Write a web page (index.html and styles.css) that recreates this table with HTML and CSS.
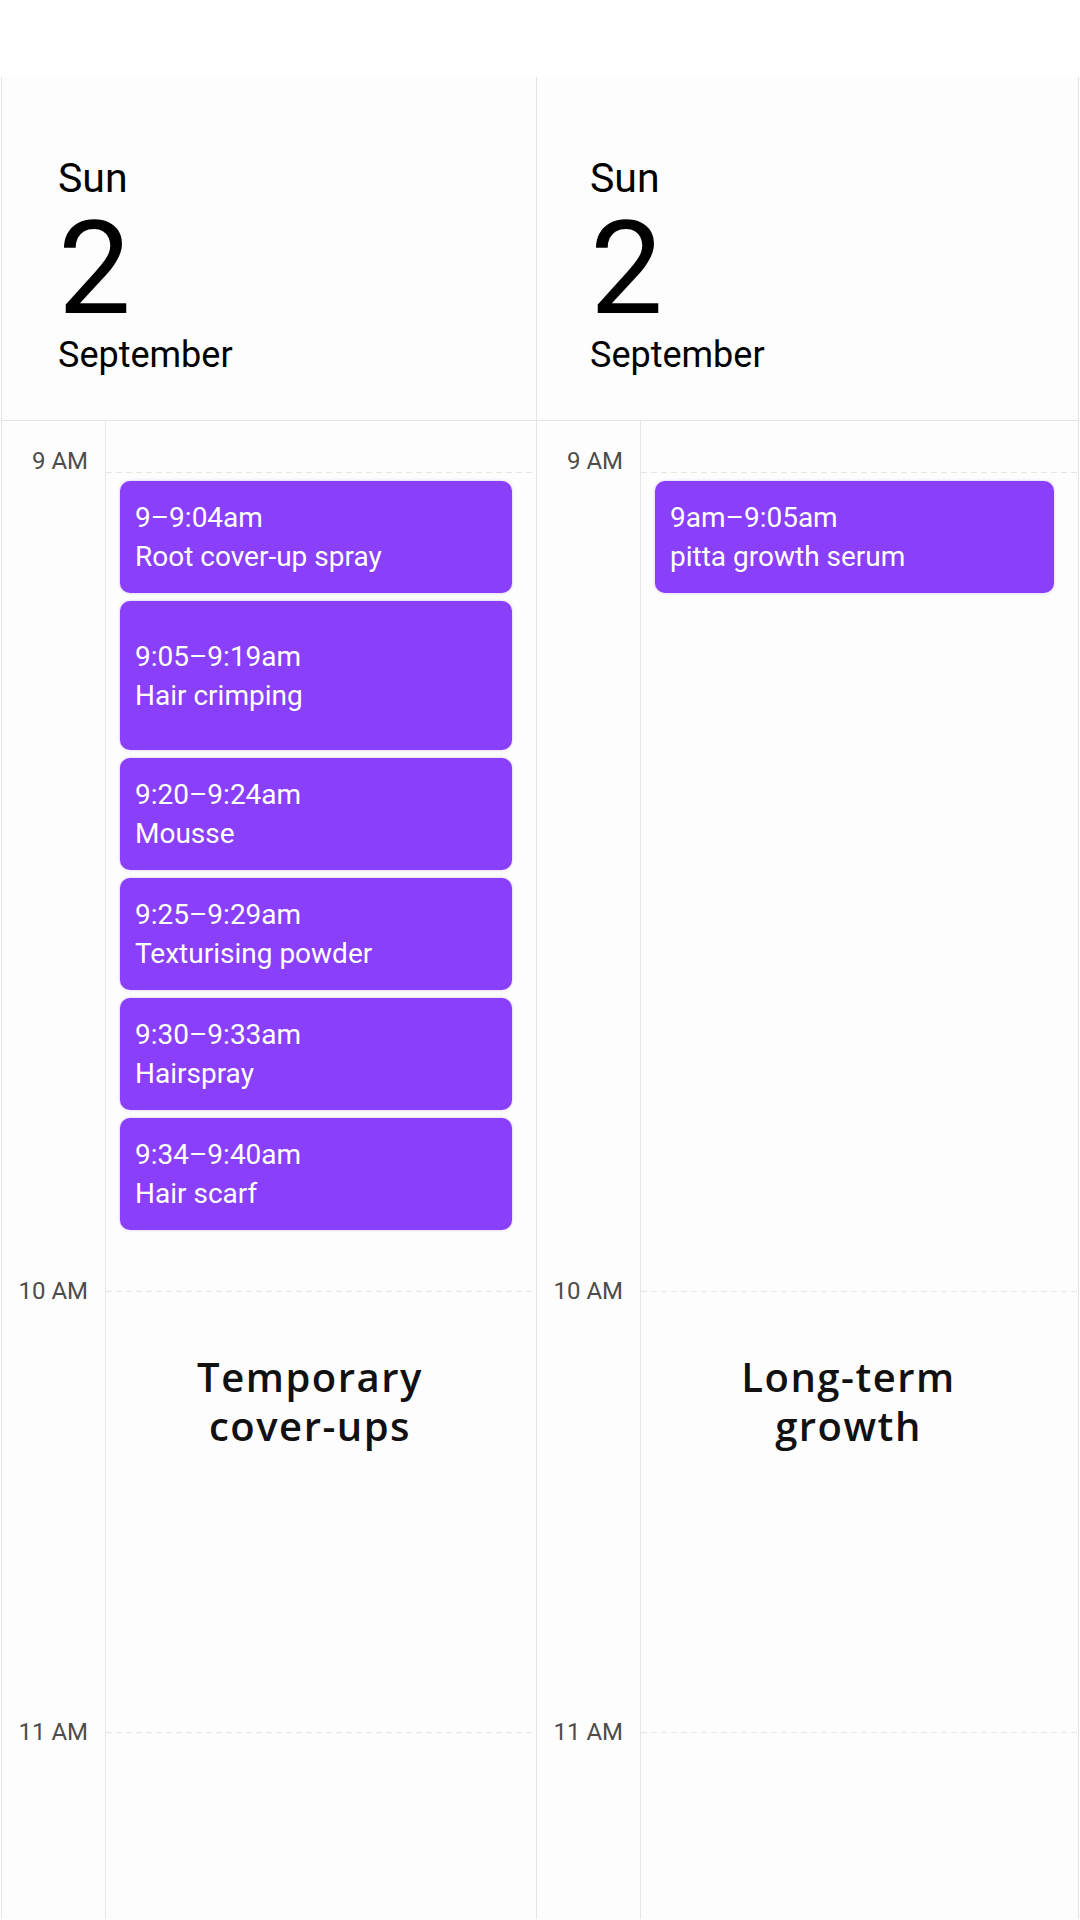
FILE: index.html
```html
<!DOCTYPE html>
<html lang="en">
<head>
    <meta charset="UTF-8">
    <meta name="viewport" content="width=device-width, initial-scale=1.0">
    <title>Hair routine - Sun 2 September</title>
    <link rel="stylesheet" href="styles.css">
</head>
<body>
    <div class="calendar">
        <section class="day">
            <header class="day-head">
                <div class="weekday">Sun</div>
                <div class="date">2</div>
                <div class="month">September</div>
            </header>
            <div class="day-body">
                <div class="gutter-cell gutter-top"><span class="hour-label">9 AM</span></div>
                <div class="lane-cell"></div>

                <div class="gutter-cell"></div>
                <div class="lane-cell slot">
                    <div class="events">
                        <div class="event">
                            <span class="event-time">9–9:04am</span>
                            <span class="event-title">Root cover-up spray</span>
                        </div>
                        <div class="event long">
                            <span class="event-time">9:05–9:19am</span>
                            <span class="event-title">Hair crimping</span>
                        </div>
                        <div class="event">
                            <span class="event-time">9:20–9:24am</span>
                            <span class="event-title">Mousse</span>
                        </div>
                        <div class="event">
                            <span class="event-time">9:25–9:29am</span>
                            <span class="event-title">Texturising powder</span>
                        </div>
                        <div class="event">
                            <span class="event-time">9:30–9:33am</span>
                            <span class="event-title">Hairspray</span>
                        </div>
                        <div class="event">
                            <span class="event-time">9:34–9:40am</span>
                            <span class="event-title">Hair scarf</span>
                        </div>
                    </div>
                </div>

                <div class="gutter-cell"><span class="hour-label">10 AM</span></div>
                <div class="lane-cell slot">
                    <p class="note">Temporary<br>cover-ups</p>
                </div>

                <div class="gutter-cell"><span class="hour-label">11 AM</span></div>
                <div class="lane-cell slot"></div>
            </div>
        </section>

        <section class="day">
            <header class="day-head">
                <div class="weekday">Sun</div>
                <div class="date">2</div>
                <div class="month">September</div>
            </header>
            <div class="day-body">
                <div class="gutter-cell gutter-top"><span class="hour-label">9 AM</span></div>
                <div class="lane-cell"></div>

                <div class="gutter-cell"></div>
                <div class="lane-cell slot">
                    <div class="events">
                        <div class="event">
                            <span class="event-time">9am–9:05am</span>
                            <span class="event-title">pitta growth serum</span>
                        </div>
                    </div>
                </div>

                <div class="gutter-cell"><span class="hour-label">10 AM</span></div>
                <div class="lane-cell slot">
                    <p class="note">Long-term<br>growth</p>
                </div>

                <div class="gutter-cell"><span class="hour-label">11 AM</span></div>
                <div class="lane-cell slot"></div>
            </div>
        </section>
    </div>
</body>
</html>
```

FILE: styles.css
```css
body {
    margin: 0;
    background-color: #ffffff;
    font-family: Roboto, 'Liberation Sans', sans-serif;
    color: #000000;
}
.calendar {
    display: grid;
    grid-template-columns: 535px 543px;
    margin: 77px 0 0 1px;
    background-color: #fdfdfd;
}
.day {
    border-left: 1px solid #e4e4e4;
}
.day:last-child {
    border-right: 1px solid #e4e4e4;
}
.day-head {
    height: 344px;
    padding: 77px 0 0 56px;
    box-sizing: border-box;
    border-bottom: 1px solid #e4e4e4;
}
.day:last-child .day-head {
    padding-left: 53px;
}
.weekday {
    font-size: 41px;
    line-height: 48px;
}
.date {
    font-size: 130px;
    line-height: 120px;
    margin-top: 7px;
}
.month {
    font-size: 36px;
    line-height: 44px;
    margin-top: 4px;
}
.day-body {
    display: grid;
    grid-template-columns: 104px 1fr;
    grid-template-rows: 51px 819px 441px 187px;
}
.gutter-cell {
    border-right: 1px solid #e6e6e6;
    display: flex;
    justify-content: flex-end;
    align-items: flex-start;
    padding-right: 17px;
}
.gutter-top {
    align-items: flex-end;
}
.hour-label {
    font-size: 24px;
    line-height: 30px;
    color: #4d4d4d;
    margin-top: -15px;
}
.gutter-top .hour-label {
    margin: 0 0 -4px;
}
.slot {
    background-image: linear-gradient(to right, #e6e6e6 60%, transparent 60%);
    background-size: 10px 1px;
    background-repeat: repeat-x;
    background-position: top left;
}
.events {
    display: flex;
    flex-direction: column;
    gap: 8px;
    padding: 9px 24px 0 14px;
}
.event {
    height: 112px;
    box-sizing: border-box;
    padding: 0 15px;
    display: flex;
    flex-direction: column;
    justify-content: center;
    background-color: #8a3ffa;
    border-radius: 10px;
    box-shadow: 0 0 3px rgba(138, 63, 250, 0.35);
    color: #ffffff;
    font-size: 28px;
    line-height: 39px;
}
.event.long {
    height: 149px;
}
.note {
    margin: 0;
    padding: 61px 22px 0 0;
    text-align: center;
    font-family: 'Open Sans', sans-serif;
    font-weight: 600;
    font-size: 40px;
    line-height: 49px;
    letter-spacing: 1.5px;
    color: #111111;
}
```
